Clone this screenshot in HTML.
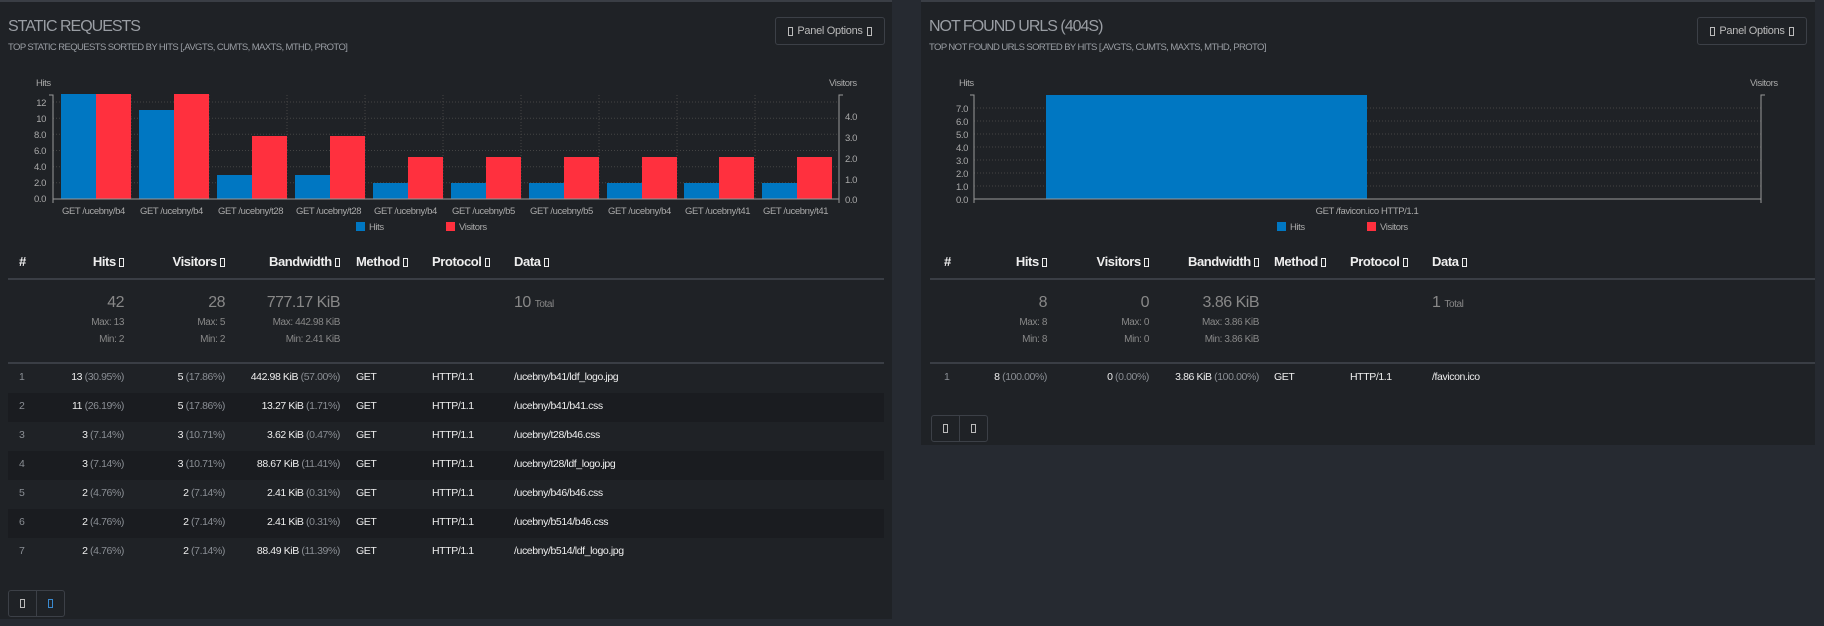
<!DOCTYPE html>
<html><head><meta charset="utf-8"><style>
*{margin:0;padding:0;box-sizing:border-box}
body{width:1824px;height:626px;background:#262a31;font-family:"Liberation Sans",sans-serif;position:relative;overflow:hidden;color:#ddd}
.panel{position:absolute;background:#1f2226;border-top:2px solid #3a3e45}
.a{position:absolute;white-space:nowrap}
.t{font-size:16px;color:#9a9ea4;letter-spacing:-1px}
.st{font-size:9.5px;color:#9a9ea4;letter-spacing:-.6px}
.btn{position:absolute;border:1px solid #3c4047;border-radius:3px;font-size:11px;color:#bbb;display:flex;align-items:center;justify-content:center;gap:4px;letter-spacing:-.3px}
.box{display:inline-block;width:5px;height:9px;border:1px solid currentColor;vertical-align:middle}
.h{font-size:13px;font-weight:bold;color:#eee;letter-spacing:-.4px}
.r{text-align:right}
.big{font-size:16px;color:#888;font-weight:300;letter-spacing:-.5px}
.sm{font-size:10px;color:#888;letter-spacing:-.4px}
.c{font-size:10.5px;color:#eee;letter-spacing:-.4px}
.g{color:#8a8e94}
.band{position:absolute;background:#1a1c20}
.line{position:absolute;height:2px;background:#3a3e45}
</style></head><body>

<div class="panel" style="left:0;top:0;width:892px;height:619px">
<div class="a t" style="left:8px;top:16px">STATIC REQUESTS</div>
<div class="a st" style="left:8px;top:40px">TOP STATIC REQUESTS SORTED BY HITS [,AVGTS, CUMTS, MAXTS, MTHD, PROTO]</div>
<div class="btn" style="left:775px;top:15px;width:110px;height:28px"><span class="box"></span>Panel Options <span class="box"></span></div>
<svg class="a" style="left:0;top:0" width="892" height="240" font-family="Liberation Sans" font-size="9.5" letter-spacing="-0.4">
<defs>
<clipPath id="c0"><rect x="0" y="200" width="892" height="20"/></clipPath>
</defs>
<g stroke="#444" stroke-dasharray="1,2">
<line x1="53" x2="839" y1="100" y2="100"/><line x1="53" x2="839" y1="116.2" y2="116.2"/><line x1="53" x2="839" y1="132.3" y2="132.3"/><line x1="53" x2="839" y1="148.5" y2="148.5"/><line x1="53" x2="839" y1="164.7" y2="164.7"/><line x1="53" x2="839" y1="180.8" y2="180.8"/>
<line x1="131" x2="131" y1="93" y2="197"/><line x1="209" x2="209" y1="93" y2="197"/><line x1="287" x2="287" y1="93" y2="197"/><line x1="365" x2="365" y1="93" y2="197"/><line x1="443" x2="443" y1="93" y2="197"/><line x1="521" x2="521" y1="93" y2="197"/><line x1="599" x2="599" y1="93" y2="197"/><line x1="677" x2="677" y1="93" y2="197"/><line x1="755" x2="755" y1="93" y2="197"/>
</g>
<g fill="#0077c2">
<rect x="61" y="92" width="35" height="105"/><rect x="139" y="108" width="35" height="89"/><rect x="217" y="173" width="35" height="24"/><rect x="295" y="173" width="35" height="24"/><rect x="373" y="181" width="35" height="16"/><rect x="451" y="181" width="35" height="16"/><rect x="529" y="181" width="35" height="16"/><rect x="607" y="181" width="35" height="16"/><rect x="684" y="181" width="35" height="16"/><rect x="762" y="181" width="35" height="16"/>
</g>
<g fill="#ff303e">
<rect x="96" y="92" width="35" height="105"/><rect x="174" y="92" width="35" height="105"/><rect x="252" y="134" width="35" height="63"/><rect x="330" y="134" width="35" height="63"/><rect x="408" y="155" width="35" height="42"/><rect x="486" y="155" width="35" height="42"/><rect x="564" y="155" width="35" height="42"/><rect x="642" y="155" width="35" height="42"/><rect x="719" y="155" width="35" height="42"/><rect x="797" y="155" width="35" height="42"/>
</g>
<g stroke="#999" fill="none"><path d="M49 93H53V201M53 197H839M843 93H839V201"/></g>
<g fill="#aaa" text-anchor="end">
<text x="46" y="104">12</text><text x="46" y="120">10</text><text x="46" y="136">8.0</text><text x="46" y="152">6.0</text><text x="46" y="168">4.0</text><text x="46" y="184">2.0</text><text x="46" y="200">0.0</text>
</g>
<g fill="#aaa"><text x="845" y="118">4.0</text><text x="845" y="139">3.0</text><text x="845" y="160">2.0</text><text x="845" y="181">1.0</text><text x="845" y="201">0.0</text>
<text x="36" y="84">Hits</text><text x="829" y="84">Visitors</text></g>
<g fill="#aaa">
<svg x="61" y="200" width="70" height="16"><text x="1" y="12">GET /ucebny/b4</text></svg>
<svg x="139" y="200" width="70" height="16"><text x="1" y="12">GET /ucebny/b4</text></svg>
<svg x="217" y="200" width="70" height="16"><text x="1" y="12">GET /ucebny/t28</text></svg>
<svg x="295" y="200" width="70" height="16"><text x="1" y="12">GET /ucebny/t28</text></svg>
<svg x="373" y="200" width="70" height="16"><text x="1" y="12">GET /ucebny/b4</text></svg>
<svg x="451" y="200" width="70" height="16"><text x="1" y="12">GET /ucebny/b5</text></svg>
<svg x="529" y="200" width="70" height="16"><text x="1" y="12">GET /ucebny/b5</text></svg>
<svg x="607" y="200" width="70" height="16"><text x="1" y="12">GET /ucebny/b4</text></svg>
<svg x="684" y="200" width="70" height="16"><text x="1" y="12">GET /ucebny/t41</text></svg>
<svg x="762" y="200" width="70" height="16"><text x="1" y="12">GET /ucebny/t41</text></svg>
</g>
<rect x="356" y="220" width="9" height="9" fill="#0077c2"/><text x="369" y="228" fill="#aaa">Hits</text>
<rect x="446" y="220" width="9" height="9" fill="#ff303e"/><text x="459" y="228" fill="#aaa">Visitors</text>
</svg>
<div class="a h" style="left:19px;top:252px">#</div>
<div class="a h r" style="right:768px;top:252px">Hits <span class="box"></span></div>
<div class="a h r" style="right:667px;top:252px">Visitors <span class="box"></span></div>
<div class="a h r" style="right:552px;top:252px">Bandwidth <span class="box"></span></div>
<div class="a h" style="left:356px;top:252px">Method <span class="box"></span></div>
<div class="a h" style="left:432px;top:252px">Protocol <span class="box"></span></div>
<div class="a h" style="left:514px;top:252px">Data <span class="box"></span></div>
<div class="line" style="left:8px;width:876px;top:276px"></div>
<div class="a big r" style="right:768px;top:292px">42</div>
<div class="a big r" style="right:667px;top:292px">28</div>
<div class="a big r" style="right:552px;top:292px">777.17 KiB</div>
<div class="a big" style="left:514px;top:292px">10 <span class="sm">Total</span></div>
<div class="a sm r" style="right:768px;top:315px">Max: 13</div><div class="a sm r" style="right:768px;top:332px">Min: 2</div>
<div class="a sm r" style="right:667px;top:315px">Max: 5</div><div class="a sm r" style="right:667px;top:332px">Min: 2</div>
<div class="a sm r" style="right:552px;top:315px">Max: 442.98 KiB</div><div class="a sm r" style="right:552px;top:332px">Min: 2.41 KiB</div>
<div class="line" style="left:8px;width:876px;top:360px"></div>
<div class="band" style="left:8px;width:876px;top:391px;height:29px"></div>
<div class="band" style="left:8px;width:876px;top:449px;height:29px"></div>
<div class="band" style="left:8px;width:876px;top:507px;height:29px"></div>
<div style="position:absolute;left:0;top:369px">
<div class="a c g" style="left:19px;top:0">1</div><div class="a c r" style="right:-124px">13 <span class="g">(30.95%)</span></div><div class="a c r" style="right:-225px">5 <span class="g">(17.86%)</span></div><div class="a c r" style="right:-340px">442.98 KiB <span class="g">(57.00%)</span></div><div class="a c" style="left:356px">GET</div><div class="a c" style="left:432px">HTTP/1.1</div><div class="a c" style="left:514px">/ucebny/b41/ldf_logo.jpg</div>
</div>
<div style="position:absolute;left:0;top:398px">
<div class="a c g" style="left:19px;top:0">2</div><div class="a c r" style="right:-124px">11 <span class="g">(26.19%)</span></div><div class="a c r" style="right:-225px">5 <span class="g">(17.86%)</span></div><div class="a c r" style="right:-340px">13.27 KiB <span class="g">(1.71%)</span></div><div class="a c" style="left:356px">GET</div><div class="a c" style="left:432px">HTTP/1.1</div><div class="a c" style="left:514px">/ucebny/b41/b41.css</div>
</div>
<div style="position:absolute;left:0;top:427px">
<div class="a c g" style="left:19px;top:0">3</div><div class="a c r" style="right:-124px">3 <span class="g">(7.14%)</span></div><div class="a c r" style="right:-225px">3 <span class="g">(10.71%)</span></div><div class="a c r" style="right:-340px">3.62 KiB <span class="g">(0.47%)</span></div><div class="a c" style="left:356px">GET</div><div class="a c" style="left:432px">HTTP/1.1</div><div class="a c" style="left:514px">/ucebny/t28/b46.css</div>
</div>
<div style="position:absolute;left:0;top:456px">
<div class="a c g" style="left:19px;top:0">4</div><div class="a c r" style="right:-124px">3 <span class="g">(7.14%)</span></div><div class="a c r" style="right:-225px">3 <span class="g">(10.71%)</span></div><div class="a c r" style="right:-340px">88.67 KiB <span class="g">(11.41%)</span></div><div class="a c" style="left:356px">GET</div><div class="a c" style="left:432px">HTTP/1.1</div><div class="a c" style="left:514px">/ucebny/t28/ldf_logo.jpg</div>
</div>
<div style="position:absolute;left:0;top:485px">
<div class="a c g" style="left:19px;top:0">5</div><div class="a c r" style="right:-124px">2 <span class="g">(4.76%)</span></div><div class="a c r" style="right:-225px">2 <span class="g">(7.14%)</span></div><div class="a c r" style="right:-340px">2.41 KiB <span class="g">(0.31%)</span></div><div class="a c" style="left:356px">GET</div><div class="a c" style="left:432px">HTTP/1.1</div><div class="a c" style="left:514px">/ucebny/b46/b46.css</div>
</div>
<div style="position:absolute;left:0;top:514px">
<div class="a c g" style="left:19px;top:0">6</div><div class="a c r" style="right:-124px">2 <span class="g">(4.76%)</span></div><div class="a c r" style="right:-225px">2 <span class="g">(7.14%)</span></div><div class="a c r" style="right:-340px">2.41 KiB <span class="g">(0.31%)</span></div><div class="a c" style="left:356px">GET</div><div class="a c" style="left:432px">HTTP/1.1</div><div class="a c" style="left:514px">/ucebny/b514/b46.css</div>
</div>
<div style="position:absolute;left:0;top:543px">
<div class="a c g" style="left:19px;top:0">7</div><div class="a c r" style="right:-124px">2 <span class="g">(4.76%)</span></div><div class="a c r" style="right:-225px">2 <span class="g">(7.14%)</span></div><div class="a c r" style="right:-340px">88.49 KiB <span class="g">(11.39%)</span></div><div class="a c" style="left:356px">GET</div><div class="a c" style="left:432px">HTTP/1.1</div><div class="a c" style="left:514px">/ucebny/b514/ldf_logo.jpg</div>
</div>
<div class="btn" style="left:8px;top:588px;width:29px;height:27px;border-radius:3px 0 0 3px"><span class="box"></span></div>
<div class="btn" style="left:36px;top:588px;width:29px;height:27px;border-radius:0 3px 3px 0;color:#3a8ad0"><span class="box"></span></div>
</div>

<div class="panel" style="left:921px;top:0;width:894px;height:445px">
<div class="a t" style="left:8px;top:16px">NOT FOUND URLS (404S)</div>
<div class="a st" style="left:8px;top:40px">TOP NOT FOUND URLS SORTED BY HITS [,AVGTS, CUMTS, MAXTS, MTHD, PROTO]</div>
<div class="btn" style="left:776px;top:15px;width:110px;height:28px"><span class="box"></span>Panel Options <span class="box"></span></div>
<svg class="a" style="left:0;top:0" width="894" height="240" font-family="Liberation Sans" font-size="9.5" letter-spacing="-0.4">
<g stroke="#444" stroke-dasharray="1,2">
<line x1="53" x2="840" y1="106" y2="106"/><line x1="53" x2="840" y1="119" y2="119"/><line x1="53" x2="840" y1="132" y2="132"/><line x1="53" x2="840" y1="145" y2="145"/><line x1="53" x2="840" y1="158" y2="158"/><line x1="53" x2="840" y1="171" y2="171"/><line x1="53" x2="840" y1="184" y2="184"/>
</g>
<rect x="125" y="93" width="321" height="104" fill="#0077c2"/>
<g stroke="#999" fill="none"><path d="M49 93H53V201M53 197H840M844 93H840V201"/></g>
<g fill="#aaa" text-anchor="end">
<text x="47" y="110">7.0</text><text x="47" y="123">6.0</text><text x="47" y="136">5.0</text><text x="47" y="149">4.0</text><text x="47" y="162">3.0</text><text x="47" y="175">2.0</text><text x="47" y="188">1.0</text><text x="47" y="201">0.0</text>
</g>
<g fill="#aaa"><text x="38" y="84">Hits</text><text x="829" y="84">Visitors</text>
<text x="446" y="212" text-anchor="middle">GET /favicon.ico HTTP/1.1</text></g>
<rect x="356" y="220" width="9" height="9" fill="#0077c2"/><text x="369" y="228" fill="#aaa">Hits</text>
<rect x="446" y="220" width="9" height="9" fill="#ff303e"/><text x="459" y="228" fill="#aaa">Visitors</text>
</svg>
<div class="a h" style="left:23px;top:252px">#</div>
<div class="a h r" style="right:768px;top:252px">Hits <span class="box"></span></div>
<div class="a h r" style="right:666px;top:252px">Visitors <span class="box"></span></div>
<div class="a h r" style="right:556px;top:252px">Bandwidth <span class="box"></span></div>
<div class="a h" style="left:353px;top:252px">Method <span class="box"></span></div>
<div class="a h" style="left:429px;top:252px">Protocol <span class="box"></span></div>
<div class="a h" style="left:511px;top:252px">Data <span class="box"></span></div>
<div class="line" style="left:9px;width:885px;top:276px"></div>
<div class="a big r" style="right:768px;top:292px">8</div>
<div class="a big r" style="right:666px;top:292px">0</div>
<div class="a big r" style="right:556px;top:292px">3.86 KiB</div>
<div class="a big" style="left:511px;top:292px">1 <span class="sm">Total</span></div>
<div class="a sm r" style="right:768px;top:315px">Max: 8</div><div class="a sm r" style="right:768px;top:332px">Min: 8</div>
<div class="a sm r" style="right:666px;top:315px">Max: 0</div><div class="a sm r" style="right:666px;top:332px">Min: 0</div>
<div class="a sm r" style="right:556px;top:315px">Max: 3.86 KiB</div><div class="a sm r" style="right:556px;top:332px">Min: 3.86 KiB</div>
<div class="line" style="left:9px;width:885px;top:360px"></div>
<div style="position:absolute;left:0;top:369px">
<div class="a c g" style="left:23px">1</div><div class="a c r" style="right:-126px">8 <span class="g">(100.00%)</span></div><div class="a c r" style="right:-228px">0 <span class="g">(0.00%)</span></div><div class="a c r" style="right:-338px">3.86 KiB <span class="g">(100.00%)</span></div><div class="a c" style="left:353px">GET</div><div class="a c" style="left:429px">HTTP/1.1</div><div class="a c" style="left:511px">/favicon.ico</div>
</div>
<div class="btn" style="left:10px;top:413px;width:29px;height:27px;border-radius:3px 0 0 3px"><span class="box"></span></div>
<div class="btn" style="left:38px;top:413px;width:29px;height:27px;border-radius:0 3px 3px 0"><span class="box"></span></div>
</div>
</body></html>
